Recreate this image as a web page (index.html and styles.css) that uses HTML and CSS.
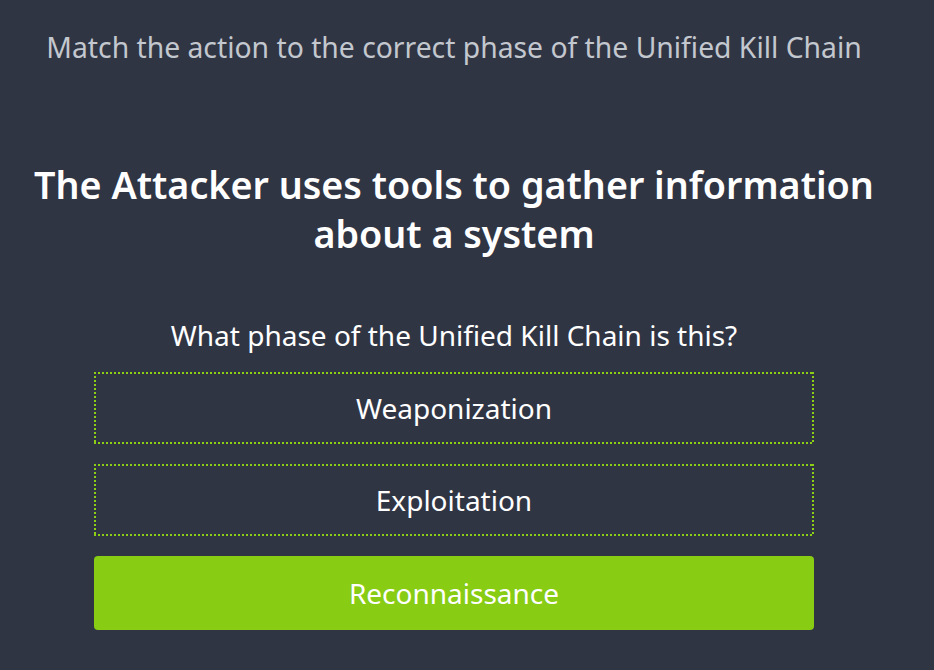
FILE: index.html
```html
<!DOCTYPE html>
<html>
<head>
<meta charset="utf-8">
<link rel="stylesheet" href="styles.css">
</head>
<body>
<main class="quiz">
  <p class="instruction">Match the action to the correct phase of the Unified Kill Chain</p>
  <h1 class="prompt">The Attacker uses tools to gather information about a system</h1>
  <p class="question">What phase of the Unified Kill Chain is this?</p>
  <div class="options">
    <button class="option option-dotted">Weaponization</button>
    <button class="option option-dotted">Exploitation</button>
    <button class="option option-correct">Reconnaissance</button>
  </div>
</main>
</body>
</html>
```
FILE: styles.css
```css
html, body {
  margin: 0;
  padding: 0;
  background: #303544;
  height: 100%;
}
body {
  font-family: "Noto Sans", "Open Sans", sans-serif;
  color: #ffffff;
  overflow: hidden;
}
.quiz {
  width: 908px;
  display: flex;
  flex-direction: column;
  align-items: center;
  padding-top: 27px;
}
.instruction {
  margin: 0;
  font-size: 28.3px;
  line-height: 40px;
  color: #c3c7ce;
  text-align: center;
}
.prompt {
  margin: 93px 0 0;
  width: 880px;
  font-size: 37.7px;
  line-height: 49px;
  font-weight: 600;
  text-align: center;
}
.question {
  margin: 59px 0 0;
  font-size: 28px;
  line-height: 36px;
  text-align: center;
}
.options {
  margin-top: 19px;
  width: 720px;
  display: flex;
  flex-direction: column;
  gap: 20px;
}
.option {
  height: 72px;
  border: 0;
  color: #ffffff;
  font-family: inherit;
  font-size: 28px;
  padding: 0;
}
.option-dotted {
  background:
    repeating-linear-gradient(90deg, #8ccf14 0 2px, transparent 2px 4px) top left / 100% 2px no-repeat,
    repeating-linear-gradient(90deg, #8ccf14 0 2px, transparent 2px 4px) bottom left / 100% 2px no-repeat,
    repeating-linear-gradient(180deg, #8ccf14 0 2px, transparent 2px 4px) top left / 2px 100% no-repeat,
    repeating-linear-gradient(180deg, #8ccf14 0 2px, transparent 2px 4px) top right / 2px 100% no-repeat;
}
.option-correct {
  background: #88cc14;
  border-radius: 4px;
  height: 74px;
}
```
